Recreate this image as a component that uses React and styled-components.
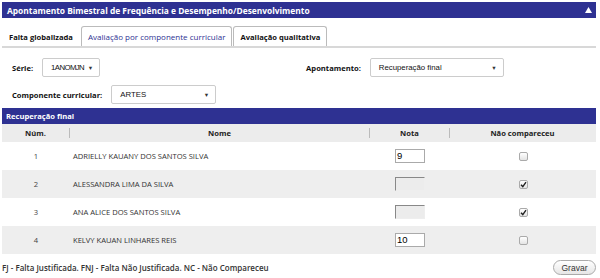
import styled, { createGlobalStyle } from 'styled-components';

const GlobalStyle = createGlobalStyle`
  body {
    margin: 0;
    background: #fff;
    font-family: "Open Sans", "Liberation Sans", sans-serif;
    color: #222;
  }
`;

const students = [
  { num: 1, name: "ADRIELLY KAUANY DOS SANTOS SILVA", nota: "9", absent: false },
  { num: 2, name: "ALESSANDRA LIMA DA SILVA", nota: "", absent: true },
  { num: 3, name: "ANA ALICE DOS SANTOS SILVA", nota: "", absent: true },
  { num: 4, name: "KELVY KAUAN LINHARES REIS", nota: "10", absent: false },
];

const Select = ({ width, tight, children }) => (
  <SelectBox $width={width} $tight={tight}>
    <span>{children}</span>
    <Caret>▼</Caret>
  </SelectBox>
);

const App = () => {
  return (
    <>
      <GlobalStyle />
      <Page>
        <TitleBar>
          <span>Apontamento Bimestral de Frequência e Desempenho/Desenvolvimento</span>
          <svg width="7" height="6" viewBox="0 0 7 6">
            <path d="M3.5 0 L7 6 L0 6 Z" fill="#fff" />
          </svg>
        </TitleBar>

        <Tabs>
          <Tab $plain>Falta globalizada</Tab>
          <Tab $active>Avaliação por componente curricular</Tab>
          <Tab>Avaliação qualitativa</Tab>
        </Tabs>

        <Filters>
          <FilterRow>
            <Field>
              <Label>Série:</Label>
              <Select width="58px" tight>1ANOMJN</Select>
            </Field>
            <Field $offset="206px">
              <Label>Apontamento:</Label>
              <Select width="134px">Recuperação final</Select>
            </Field>
          </FilterRow>
          <FilterRow>
            <Field>
              <Label>Componente curricular:</Label>
              <Select width="105px">ARTES</Select>
            </Field>
          </FilterRow>
        </Filters>

        <SectionBar>Recuperação final</SectionBar>

        <HeadRow>
          <HeadCell $divider>Núm.</HeadCell>
          <HeadCell $divider>Nome</HeadCell>
          <HeadCell $divider>Nota</HeadCell>
          <HeadCell>Não compareceu</HeadCell>
        </HeadRow>

        {students.map((s, i) => (
          <Row key={s.num} $striped={i % 2 === 1}>
            <NumCell>{s.num}</NumCell>
            <NameCell>{s.name}</NameCell>
            <CenterCell>
              <GradeInput $disabled={s.absent}>{s.nota}</GradeInput>
            </CenterCell>
            <CenterCell>
              <Check>
                {s.absent && (
                  <svg width="7" height="7" viewBox="0 0 7 7">
                    <path d="M1 3.8 L2.8 5.6 L6 1.2" stroke="#222" strokeWidth="1.4" fill="none" />
                  </svg>
                )}
              </Check>
            </CenterCell>
          </Row>
        ))}

        <Footer>
          <Legend>FJ - Falta Justificada. FNJ - Falta Não Justificada. NC - Não Compareceu</Legend>
          <SaveButton>Gravar</SaveButton>
        </Footer>
      </Page>
    </>
  );
};

const Page = styled.div`
  width: 594px;
  padding: 2px 4px 0 2px;
`;

const TitleBar = styled.div`
  height: 16px;
  background: #2e3192;
  color: #fff;
  font-size: 8.4px;
  font-weight: 700;
  display: flex;
  align-items: center;
  justify-content: space-between;
  padding: 0 4px 0 5px;
  box-sizing: border-box;
`;

const Tabs = styled.div`
  display: flex;
  align-items: flex-end;
  margin-top: 7px;
  height: 21px;
  border-bottom: 2px solid #d8d8d8;
`;

const Tab = styled.div`
  height: 20px;
  box-sizing: border-box;
  display: flex;
  align-items: center;
  padding: 0 6px;
  font-size: ${p => (p.$active ? "8px" : "7.6px")};
  font-weight: ${p => (p.$active ? 400 : 700)};
  color: ${p => (p.$active ? "#2e3192" : "#111")};
  border: 1px solid ${p => (p.$plain ? "transparent" : "#bbb")};
  border-bottom: none;
  border-radius: 3px 3px 0 0;
  margin-right: 1px;
  background: #fff;
`;

const Filters = styled.div`
  padding: 10px 0 0 10px;
  display: flex;
  flex-direction: column;
  gap: 8px;
`;

const FilterRow = styled.div`
  display: flex;
  align-items: center;
  height: 19px;
`;

const Field = styled.div`
  display: flex;
  align-items: center;
  gap: 9px;
  margin-left: ${p => p.$offset || "0"};
`;

const Label = styled.span`
  font-size: 7.6px;
  font-weight: 700;
  color: #111;
`;

const SelectBox = styled.div`
  width: ${p => p.$width};
  height: 19px;
  box-sizing: border-box;
  border: 1px solid #ccc;
  border-radius: 2px;
  background: #fff;
  display: flex;
  align-items: center;
  justify-content: space-between;
  padding: 0 6px 0 8px;
  font-family: "Liberation Sans", Arial, sans-serif;
  font-size: 7.8px;
  letter-spacing: ${p => (p.$tight ? "-0.6px" : "0")};
  color: #111;
`;

const Caret = styled.span`
  font-size: 5.5px;
  letter-spacing: 0;
  color: #333;
`;

const SectionBar = styled.div`
  margin-top: 4px;
  height: 16px;
  background: #2e3192;
  color: #fff;
  font-size: 7.6px;
  font-weight: 700;
  display: flex;
  align-items: center;
  padding-left: 4px;
`;

const columns = "68px 300px 80px 1fr";

const HeadRow = styled.div`
  display: grid;
  grid-template-columns: ${columns};
  height: 18px;
  background: #ececec;
  align-items: center;
`;

const HeadCell = styled.div`
  text-align: center;
  font-size: 7.6px;
  font-weight: 700;
  color: #222;
  border-right: 1px solid ${p => (p.$divider ? "#bbb" : "transparent")};
  line-height: 10px;
`;

const Row = styled.div`
  display: grid;
  grid-template-columns: ${columns};
  height: 28px;
  align-items: center;
  background: ${p => (p.$striped ? "#eeeeee" : "#fff")};
`;

const NumCell = styled.div`
  text-align: center;
  font-size: 7.6px;
  color: #444;
`;

const NameCell = styled.div`
  padding-left: 3px;
  font-size: 7.6px;
  color: #333;
`;

const CenterCell = styled.div`
  display: flex;
  justify-content: center;
`;

const GradeInput = styled.div`
  width: 30px;
  height: 14px;
  box-sizing: border-box;
  border: 1px solid #aaa;
  border-top-color: ${p => (p.$disabled ? "#888" : "#aaa")};
  border-left-color: ${p => (p.$disabled ? "#888" : "#aaa")};
  border-right-color: ${p => (p.$disabled ? "#eee" : "#aaa")};
  border-bottom-color: ${p => (p.$disabled ? "#eee" : "#aaa")};
  background: ${p => (p.$disabled ? "#ececec" : "#fff")};
  font-family: "Liberation Sans", Arial, sans-serif;
  font-size: 9.5px;
  color: #000;
  padding-left: 1px;
  line-height: 12px;
`;

const Check = styled.div`
  width: 9px;
  height: 9px;
  box-sizing: border-box;
  border: 1px solid #aaa;
  border-radius: 2px;
  background: linear-gradient(#fff, #e4e4e4);
  display: flex;
  align-items: center;
  justify-content: center;
`;

const Footer = styled.div`
  display: flex;
  align-items: center;
  justify-content: space-between;
  margin-top: 6px;
`;

const Legend = styled.span`
  font-size: 8px;
  font-weight: 600;
  color: #333;
`;

const SaveButton = styled.button`
  width: 43px;
  height: 15px;
  border: 1px solid #aaa;
  border-radius: 8px;
  background: linear-gradient(#fff, #e6e6e6);
  font-family: "Liberation Sans", Arial, sans-serif;
  font-size: 8.5px;
  color: #333;
  padding: 0;
`;

export default App;
